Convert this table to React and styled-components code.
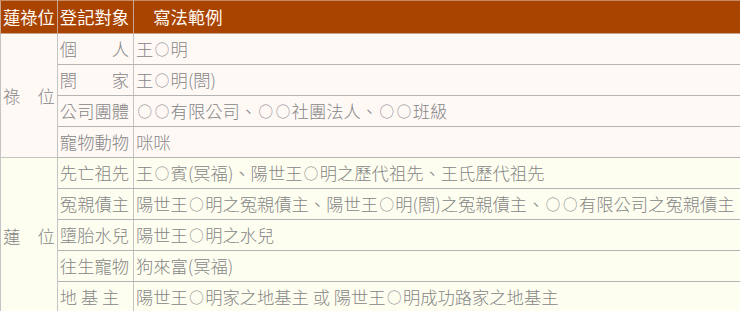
import React from "react";
import styled, { createGlobalStyle } from "styled-components";

const GlobalStyle = createGlobalStyle`
  html, body {
    margin: 0;
    padding: 0;
    background: #ffffff;
    overflow: hidden;
  }
`;

const tones = {
  lu: "#fff9f6",
  lian: "#fefef0",
};

const Table = styled.table`
  border-collapse: collapse;
  width: 780px;
  font-family: "Noto Sans CJK TC", "Liberation Sans", sans-serif;
  font-size: 17.3px;
  font-weight: 300;
  white-space: nowrap;
`;

const HeadCell = styled.th`
  background: #a84300;
  color: #fffaf2;
  font-weight: normal;
  text-align: left;
  height: 32px;
  padding: 0 2px;
  line-height: 24px;
  border: 1px solid #c9a590;
  border-top-color: #c98a66;
`;

const GroupCell = styled.td`
  background: ${(props) => tones[props.tone]};
  color: #868686;
  padding: 0 2px;
  border: 1px solid #c4c4c4;
  vertical-align: middle;
`;

const LabelCell = styled.td`
  background: ${(props) => tones[props.tone]};
  color: #868686;
  height: 30px;
  padding: 0 4px 0 2px;
  line-height: 24px;
  border: 1px solid #c4c4c4;
  border-bottom-color: #b4b4b4;
`;

const ValueCell = styled(LabelCell)`
  padding: 0 2px;
`;

// the placeholder circle takes one full-width cell, centred in it
const Blank = styled.span`
  display: inline-flex;
  justify-content: center;
  align-items: center;
  width: 17.3px;
  height: 24px;
  font-size: 14.5px;
  font-feature-settings: "fwid" 1;
  line-height: 24px;
  vertical-align: top;
`;

const withBlanks = (text) =>
  text.split("○").flatMap((part, i) =>
    i === 0 ? [part] : [<Blank key={i}>○</Blank>, part]
  );

const groups = [
  {
    tone: "lu",
    name: "祿　位",
    rows: [
      ["個　　人", "王○明"],
      ["閤　　家", "王○明(閤)"],
      ["公司團體", "○○有限公司、○○社團法人、○○班級"],
      ["寵物動物", "咪咪"],
    ],
  },
  {
    tone: "lian",
    name: "蓮　位",
    rows: [
      ["先亡祖先", "王○賓(冥福)、陽世王○明之歷代祖先、王氏歷代祖先"],
      ["冤親債主", "陽世王○明之冤親債主、陽世王○明(閤)之冤親債主、○○有限公司之冤親債主"],
      ["墮胎水兒", "陽世王○明之水兒"],
      ["往生寵物", "狗來富(冥福)"],
      ["地 基 主", "陽世王○明家之地基主 或 陽世王○明成功路家之地基主"],
    ],
  },
];

const App = () => {
  return (
    <>
      <GlobalStyle />
      <Table>
        <colgroup>
          <col style={{ width: 56 }} />
          <col style={{ width: 76 }} />
          <col />
        </colgroup>
        <thead>
          <tr>
            <HeadCell>蓮祿位</HeadCell>
            <HeadCell>登記對象</HeadCell>
            <HeadCell>　寫法範例</HeadCell>
          </tr>
        </thead>
        <tbody>
          {groups.map((group) =>
            group.rows.map(([label, value], i) => (
              <tr key={group.tone + i}>
                {i === 0 && (
                  <GroupCell tone={group.tone} rowSpan={group.rows.length}>
                    {group.name}
                  </GroupCell>
                )}
                <LabelCell tone={group.tone}>{label}</LabelCell>
                <ValueCell tone={group.tone}>{withBlanks(value)}</ValueCell>
              </tr>
            ))
          )}
        </tbody>
      </Table>
    </>
  );
};

export default App;
